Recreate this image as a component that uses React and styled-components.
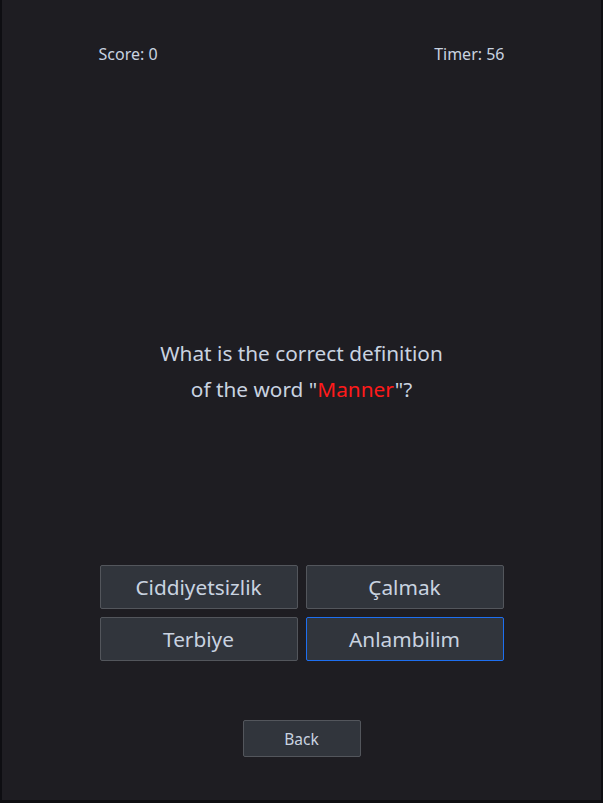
import styled, { createGlobalStyle } from 'styled-components';

const GlobalStyle = createGlobalStyle`
  html, body {
    margin: 0;
    padding: 0;
    background-color: #0e0e12;
  }
  body {
    font-family: 'Noto Sans', 'Open Sans', sans-serif;
  }
`;

const Frame = styled.div`
  margin: 0 2px;
  height: 800px;
  background-color: #1e1d22;
  display: flex;
  flex-direction: column;
  align-items: center;
  color: #c9d3e0;
`;

const Header = styled.div`
  width: 406px;
  margin-top: 43px;
  display: flex;
  justify-content: space-between;
  font-size: 16px;
  line-height: 22px;
`;

const Question = styled.div`
  margin-top: 270px;
  font-size: 20.8px;
  line-height: 36px;
  text-align: center;
  width: 300px;
`;

const Word = styled.span`
  color: #ff1a1a;
`;

const Options = styled.div`
  margin-top: 158px;
  display: grid;
  grid-template-columns: 198px 198px;
  gap: 8px;
`;

const Option = styled.button`
  height: 44px;
  background-color: #31353c;
  border: 1px solid ${p => (p.$focused ? '#1e6ff0' : '#53565c')};
  border-radius: 2px;
  color: #c9d3e0;
  font-family: inherit;
  font-size: 20.8px;
  padding: 0;
  cursor: pointer;
`;

const BackButton = styled.button`
  margin-top: 59px;
  width: 118px;
  height: 37px;
  background-color: #31353c;
  border: 1px solid #53565c;
  border-radius: 2px;
  color: #c9d3e0;
  font-family: inherit;
  font-size: 15.5px;
  padding: 0;
`;

const options = ['Ciddiyetsizlik', 'Çalmak', 'Terbiye', 'Anlambilim'];

export default function App() {
  return (
    <>
      <GlobalStyle />
      <Frame>
        <Header>
          <span>Score: 0</span>
          <span>Timer: 56</span>
        </Header>
        <Question>
          What is the correct definition of the word "<Word>Manner</Word>"?
        </Question>
        <Options>
          {options.map((o, i) => (
            <Option key={o} $focused={i === 3}>{o}</Option>
          ))}
        </Options>
        <BackButton>Back</BackButton>
      </Frame>
    </>
  );
}
